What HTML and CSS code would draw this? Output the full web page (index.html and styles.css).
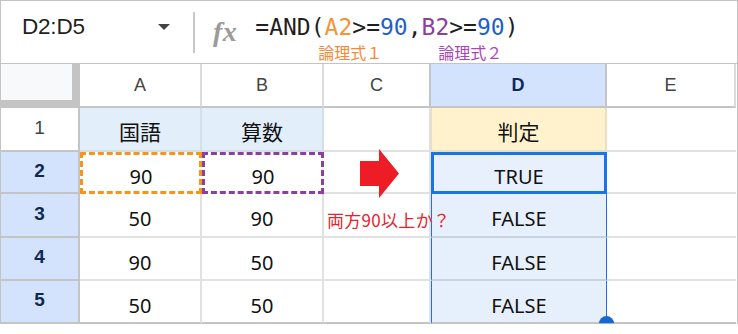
FILE: index.html
```html
<!DOCTYPE html>
<html lang="ja">
<head>
    <meta charset="UTF-8">
    <title>AND関数</title>
    <link rel="stylesheet" href="styles.css">
</head>
<body>
    <div class="sheet">
        <div class="toolbar">
            <div class="namebox">
                <span class="name">D2:D5</span>
                <span class="caret"></span>
            </div>
            <div class="sep"></div>
            <div class="fx">fx</div>
            <div class="formula">
                <div class="expr">=AND(<span class="ref-a">A2</span>&gt;=<span class="num">90</span>,<span class="ref-b">B2</span>&gt;=<span class="num">90</span>)</div>
                <div class="notes">
                    <span class="note note-a">論理式１</span>
                    <span class="note note-b">論理式２</span>
                </div>
            </div>
        </div>

        <div class="grid">
            <!-- column headers -->
            <div class="corner"></div>
            <div class="colhead">A</div>
            <div class="colhead">B</div>
            <div class="colhead">C</div>
            <div class="colhead sel">D</div>
            <div class="colhead">E</div>

            <!-- row 1 -->
            <div class="rowhead">1</div>
            <div class="cell label">国語</div>
            <div class="cell label">算数</div>
            <div class="cell"></div>
            <div class="cell title">判定</div>
            <div class="cell"></div>

            <!-- row 2 -->
            <div class="rowhead sel">2</div>
            <div class="cell dash-a">90</div>
            <div class="cell dash-b">90</div>
            <div class="cell arrow-cell">
                <svg class="arrow" width="40" height="50" viewBox="0 0 40 50">
                    <polygon points="0,12 19,12 19,0 39,24.5 19,49 19,37 0,37" fill="#ee1c25"/>
                </svg>
            </div>
            <div class="cell active">TRUE</div>
            <div class="cell"></div>

            <!-- row 3 -->
            <div class="rowhead sel">3</div>
            <div class="cell">50</div>
            <div class="cell">90</div>
            <div class="cell memo">両方90以上か？</div>
            <div class="cell range">FALSE</div>
            <div class="cell"></div>

            <!-- row 4 -->
            <div class="rowhead sel">4</div>
            <div class="cell">90</div>
            <div class="cell">50</div>
            <div class="cell"></div>
            <div class="cell range">FALSE</div>
            <div class="cell"></div>

            <!-- row 5 -->
            <div class="rowhead sel last">5</div>
            <div class="cell last">50</div>
            <div class="cell last">50</div>
            <div class="cell last"></div>
            <div class="cell range last end">FALSE<span class="handle"></span></div>
            <div class="cell last"></div>
        </div>
    </div>
</body>
</html>
```

FILE: styles.css
```css
*{
    margin: 0;
    padding: 0;
    box-sizing: border-box;
}
body{
    background-color: white;
    font-family: "Liberation Sans", Arial, sans-serif;
}
.sheet{
    width: 738px;
    border-left: 1px solid #c4c4c4;
    border-right: 1px solid #c4c4c4;
}

/* formula bar */
.toolbar{
    display: flex;
    align-items: flex-start;
    height: 64px;
    border-top: 1px solid #c4c4c4;
    border-bottom: 1px solid #c4c4c4;
}
.namebox{
    width: 192px;
    height: 52px;
    display: flex;
    align-items: center;
    justify-content: space-between;
    padding-left: 21px;
    padding-right: 23px;
}
.name{
    font-size: 22.5px;
    color: #1f1f1f;
    letter-spacing: -0.2px;
}
.caret{
    width: 0;
    height: 0;
    border-left: 6.5px solid transparent;
    border-right: 6.5px solid transparent;
    border-top: 6px solid #444;
    margin-top: -1px;
}
.sep{
    width: 2px;
    height: 41px;
    margin-top: 11px;
    background-color: #c7c7c7;
}
.fx{
    margin-left: 18px;
    margin-top: 15px;
    font-family: "Liberation Serif", serif;
    font-style: italic;
    font-weight: bold;
    font-size: 28px;
    line-height: 32px;
    color: #9b9b9b;
    letter-spacing: 0.5px;
}
.formula{
    margin-left: 18px;
    margin-top: 11px;
}
.expr{
    font-family: "DejaVu Sans Mono", monospace;
    font-size: 23px;
    line-height: 30px;
    color: #1f1f1f;
    white-space: nowrap;
}
.ref-a{ color: #f5953b; }
.ref-b{ color: #8e3e9b; }
.num{ color: #1f5fc8; }
.notes{
    display: flex;
    margin-top: 0;
}
.note{
    font-family: "Noto Sans CJK JP", sans-serif;
    font-size: 16px;
    line-height: 20px;
}
.note-a{
    color: #f38a3a;
    margin-left: 63px;
}
.note-b{
    color: #a848b2;
    margin-left: 56px;
}

/* grid */
.grid{
    display: grid;
    grid-template-columns: 79px 122px 122px 107px 176px 129px;
    grid-template-rows: 44px 44px 42px 44px 43px 43px;
}
.corner{
    background-color: #f8f9fa;
    border-right: 8px solid #c4c4c4;
    border-bottom: 8px solid #c4c4c4;
}
.colhead{
    display: flex;
    align-items: center;
    justify-content: center;
    font-size: 18px;
    color: #444;
    border-right: 2px solid #dcdcdc;
    border-bottom: 2px solid #c4c4c4;
    padding-top: 1px;
}
.colhead.sel{
    background-color: #d3e3fd;
    color: #0b2a5c;
    font-weight: bold;
    border-left: 2px solid #c4c4c4;
    border-right: 2px solid #c4c4c4;
    margin-left: -2px;
}
.colhead:last-child{
    border-right: none;
}
.rowhead{
    display: flex;
    align-items: center;
    justify-content: center;
    font-size: 19px;
    color: #444;
    border-right: 2px solid #c4c4c4;
    border-bottom: 2px solid #c4c4c4;
    padding-bottom: 3px;
}
.rowhead.sel{
    background-color: #d3e3fd;
    color: #0e2a52;
    font-weight: bold;
}
.cell{
    display: flex;
    align-items: center;
    justify-content: center;
    font-family: "Noto Sans", "Noto Sans CJK JP", sans-serif;
    font-size: 20px;
    color: #111;
    border-right: 2px solid #e1e1e1;
    border-bottom: 2px solid #e1e1e1;
    padding-top: 7px;
}
.cell.last{
    border-bottom-color: #c4c4c4;
}
.cell:nth-child(6n){
    border-right: none;
}
.label{
    background-color: #e2effb;
    border-right-color: #d3dfeb;
    border-bottom-color: #d3dfeb;
    font-family: "Noto Sans CJK JP", sans-serif;
    font-size: 21px;
    padding-top: 4px;
}
.title{
    background-color: #fff2cc;
    border-left: 1px solid #eadfbf;
    border-right-color: #eadfbf;
    border-bottom-color: #eadfbf;
    font-family: "Noto Sans CJK JP", sans-serif;
    font-size: 21px;
    padding-top: 4px;
}
.dash-a{
    border: 3px dashed #f7941d;
}
.dash-b{
    border: 3px dashed #8b3f9e;
}
.arrow-cell{
    position: relative;
    z-index: 1;
}
.arrow{
    position: absolute;
    left: 36px;
    top: -3px;
}
.active{
    background-color: #e8f0fe;
    border: 3px solid #1a73e8;
}
.range{
    background-color: #e6effc;
    border-left: 1px solid #1a73e8;
    border-right: 1px solid #1a73e8;
    border-bottom-color: #c9d3e0;
}
.memo{
    position: relative;
    z-index: 1;
    justify-content: flex-start;
    padding-left: 3px;
    padding-top: 9px;
    font-family: "Noto Sans CJK JP", sans-serif;
    font-size: 17px;
    letter-spacing: 0.3px;
    color: #e8222c;
    white-space: nowrap;
}
.end{
    position: relative;
    z-index: 1;
}
.handle{
    position: absolute;
    right: -8px;
    bottom: -9px;
    width: 15px;
    height: 15px;
    border-radius: 50%;
    background: linear-gradient(#1a66d2 0, #1a66d2 7px, #8fb3ea 7px, #8fb3ea 8px, #1a66d2 8px);
}
```
